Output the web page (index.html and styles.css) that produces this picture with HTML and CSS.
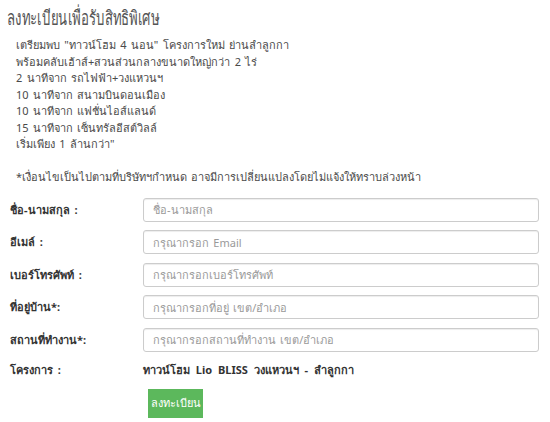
FILE: index.html
```html
<!DOCTYPE html>
<html lang="th">
<head>
    <meta charset="UTF-8">
    <meta name="viewport" content="width=device-width, initial-scale=1.0">
    <title>ลงทะเบียนเพื่อรับสิทธิพิเศษ</title>
    <link rel="stylesheet" href="styles.css">
</head>
<body>
<div class="register">
    <h2 class="title"><span>ลงทะเบียนเพื่อรับสิทธิพิเศษ</span></h2>
    <div class="intro">
        <p>เตรียมพบ "ทาวน์โฮม 4 นอน" โครงการใหม่ ย่านลำลูกกา</p>
        <p>พร้อมคลับเฮ้าส์+สวนส่วนกลางขนาดใหญ่กว่า 2 ไร่</p>
        <p>2 นาทีจาก รถไฟฟ้า+วงแหวนฯ</p>
        <p>10 นาทีจาก สนามบินดอนเมือง</p>
        <p>10 นาทีจาก แฟชั่นไอส์แลนด์</p>
        <p>15 นาทีจาก เซ็นทรัลอีสต์วิลล์</p>
        <p>เริ่มเพียง 1 ล้านกว่า"</p>
        <p class="note">*เงื่อนไขเป็นไปตามที่บริษัทฯกำหนด อาจมีการเปลี่ยนแปลงโดยไม่แจ้งให้ทราบล่วงหน้า</p>
    </div>

    <form class="reg-form" onsubmit="return false;">
        <div class="form-row">
            <label for="name">ชื่อ-นามสกุล :</label>
            <input type="text" id="name" placeholder="ชื่อ-นามสกุล">
        </div>
        <div class="form-row">
            <label for="email">อีเมล์ :</label>
            <input type="email" id="email" placeholder="กรุณากรอก Email">
        </div>
        <div class="form-row">
            <label for="tel">เบอร์โทรศัพท์ :</label>
            <input type="text" id="tel" placeholder="กรุณากรอกเบอร์โทรศัพท์">
        </div>
        <div class="form-row">
            <label for="home">ที่อยู่บ้าน*:</label>
            <input type="text" id="home" placeholder="กรุณากรอกที่อยู่ เขต/อำเภอ">
        </div>
        <div class="form-row">
            <label for="work">สถานที่ทำงาน*:</label>
            <input type="text" id="work" placeholder="กรุณากรอกสถานที่ทำงาน เขต/อำเภอ">
        </div>
        <div class="form-row project-row">
            <label>โครงการ :</label>
            <span class="project">ทาวน์โฮม Lio BLISS วงแหวนฯ - ลำลูกกา</span>
        </div>
        <div class="form-row">
            <span></span>
            <div><button type="submit" class="submit-btn">ลงทะเบียน</button></div>
        </div>
    </form>
</div>
</body>
</html>
```

FILE: styles.css
```css
body { font-family: Tahoma, "Noto Sans", "DejaVu Sans", sans-serif; background: #fff; color: #555; margin: 0; }
.register { padding: 5px 11px 0 7px; }
.title { font-size: 20px; font-weight: normal; color: #555; margin: 0 0 6px 0; line-height: 26px; }
.title span { display: inline-block; transform: scaleX(0.66); transform-origin: left center; }
.intro { padding-left: 9px; font-size: 11px; color: #4a4a4a; word-spacing: 1.5px; }
.intro p { margin: 0; line-height: 16.5px; }
.intro .note { margin-top: 16.5px; }

/* ฟอร์มลงทะเบียน */
.reg-form { margin-top: 12px; }
.form-row { display: grid; grid-template-columns: 136px 1fr; align-items: center; margin-bottom: 8.5px; }
.form-row label { font-size: 11px; font-weight: bold; color: #333; padding-left: 3px; word-spacing: 2px; }
.form-row input {
    height: 24px;
    box-sizing: border-box;
    border: 1px solid #ccc;
    border-radius: 3px;
    box-shadow: inset 0 1px 1px rgba(0,0,0,0.075);
    padding: 0 9px;
    font-family: inherit;
    font-size: 11px;
    word-spacing: 1.5px;
    color: #555;
}
.form-row input::placeholder { color: #999; }
.project-row { margin: 9px 0 10px 0; }
.project { font-size: 11px; font-weight: bold; color: #333; word-spacing: 3px; }
.submit-btn {
    margin-left: 5px;
    background-color: #5cb85c;
    color: white;
    border: none;
    font-family: inherit;
    font-size: 11px;
    width: 55px;
    height: 29px;
    padding: 0;
    cursor: pointer;
}
.submit-btn:hover { background-color: #449d44; }
```
